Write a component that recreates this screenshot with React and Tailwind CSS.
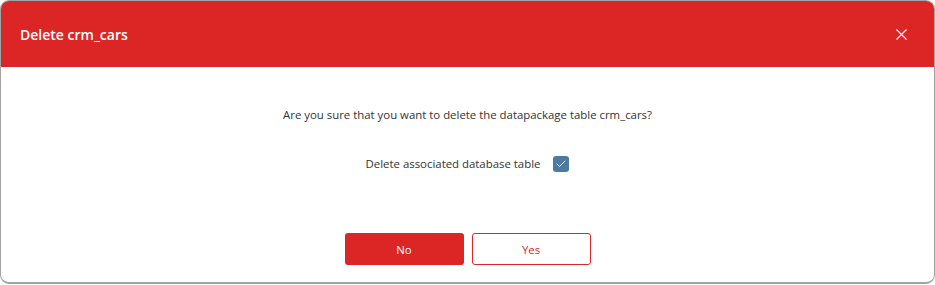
import { X, Check } from 'lucide-react';

const App = () => {
  return (
    <div className="w-[935px] h-[285px] bg-white" style={{ fontFamily: '"Open Sans", "Noto Sans", sans-serif' }}>
      <div className="w-[935px] h-[284px] border border-[#a3a3a3] border-b-2 rounded-[9px] overflow-hidden flex flex-col bg-white">
        {/* Header */}
        <div className="h-[66px] shrink-0 bg-[#dc2626] flex items-center justify-between pl-[19px] pr-[23px]">
          <span className="text-white text-[14px] font-semibold">Delete crm_cars</span>
          <X className="w-[19px] h-[19px] text-white" strokeWidth={1.4} />
        </div>

        {/* Body */}
        <div className="flex-1 flex flex-col items-center">
          <p className="mt-[39px] text-[11.4px] text-[#333]">
            Are you sure that you want to delete the datapackage table crm_cars?
          </p>
          <div className="mt-[32px] flex items-center gap-[13px]">
            <span className="text-[11.4px] text-[#333]">Delete associated database table</span>
            <span className="w-[16px] h-[16px] rounded-[3px] bg-[#4e7aa0] flex items-center justify-center">
              <Check className="w-[12px] h-[12px] text-white" strokeWidth={2} />
            </span>
          </div>
          <div className="mt-[61px] flex gap-[8px]">
            <button className="w-[119px] h-[32px] rounded-[3px] bg-[#dc2626] text-white text-[11.4px]">No</button>
            <button className="w-[119px] h-[32px] rounded-[3px] border border-[#dc2626] bg-white text-[#dc2626] text-[11.4px]">Yes</button>
          </div>
        </div>
      </div>
    </div>
  );
};

export default App;
